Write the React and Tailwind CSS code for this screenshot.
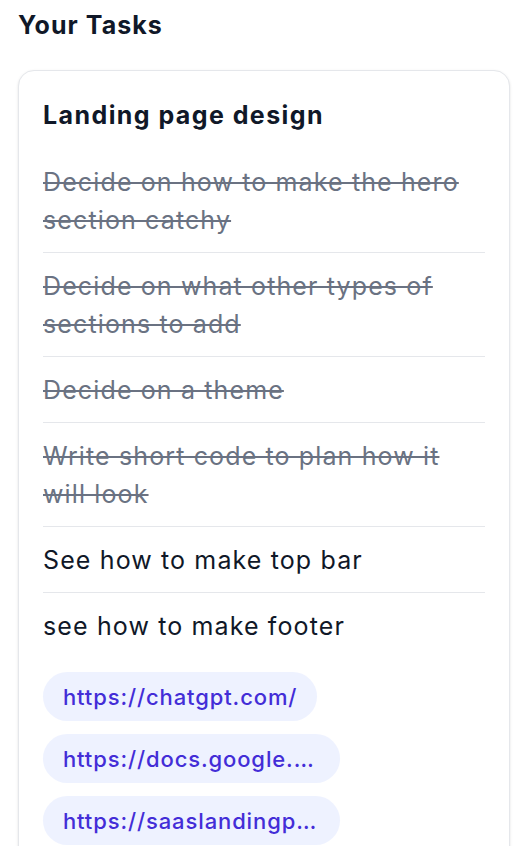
import React from 'react'

const tasks = [
  { text: 'Decide on how to make the hero section catchy', done: true },
  { text: 'Decide on what other types of sections to add', done: true },
  { text: 'Decide on a theme', done: true },
  { text: 'Write short code to plan how it will look', done: true },
  { text: 'See how to make top bar', done: false },
  { text: 'see how to make footer', done: false },
]

const links = [
  'https://chatgpt.com/',
  'https://docs.google.com/document/d/1x9',
  'https://saaslandingpage.com/',
]

const App = () => {
  return (
    <div className="min-h-screen bg-white px-[18px] pt-[9px] text-gray-900" style={{ fontFamily: 'Inter, "Noto Sans", sans-serif' }}>
      <h1 className="text-[25px] leading-8 font-bold tracking-[0.042em]">Your Tasks</h1>

      <div className="mt-[29px] rounded-2xl border border-gray-200 bg-white px-6 pt-[28px] pb-6 shadow-sm">
        <h2 className="text-[25px] leading-8 font-bold tracking-[0.057em]">Landing page design</h2>

        <ul className="mt-[18px]">
          {tasks.map((t, i) => (
            <li
              key={i}
              className={`py-[13.5px] text-[25px] leading-[38px] tracking-[0.045em] ${i < tasks.length - 1 ? 'border-b border-gray-200' : ''} ${t.done ? 'text-gray-500 line-through' : 'text-gray-900'}`}
            >
              {t.text}
            </li>
          ))}
        </ul>

        <div className="mt-[14px] flex flex-col items-start gap-[13px]">
          {links.map((l) => (
            <a
              key={l}
              href={l}
              className="block max-w-[297px] truncate rounded-full bg-indigo-50 px-5 py-[10.5px] text-[22px] leading-7 font-medium tracking-[0.04em] text-indigo-700"
            >
              {l}
            </a>
          ))}
        </div>
      </div>
    </div>
  )
}

export default App
